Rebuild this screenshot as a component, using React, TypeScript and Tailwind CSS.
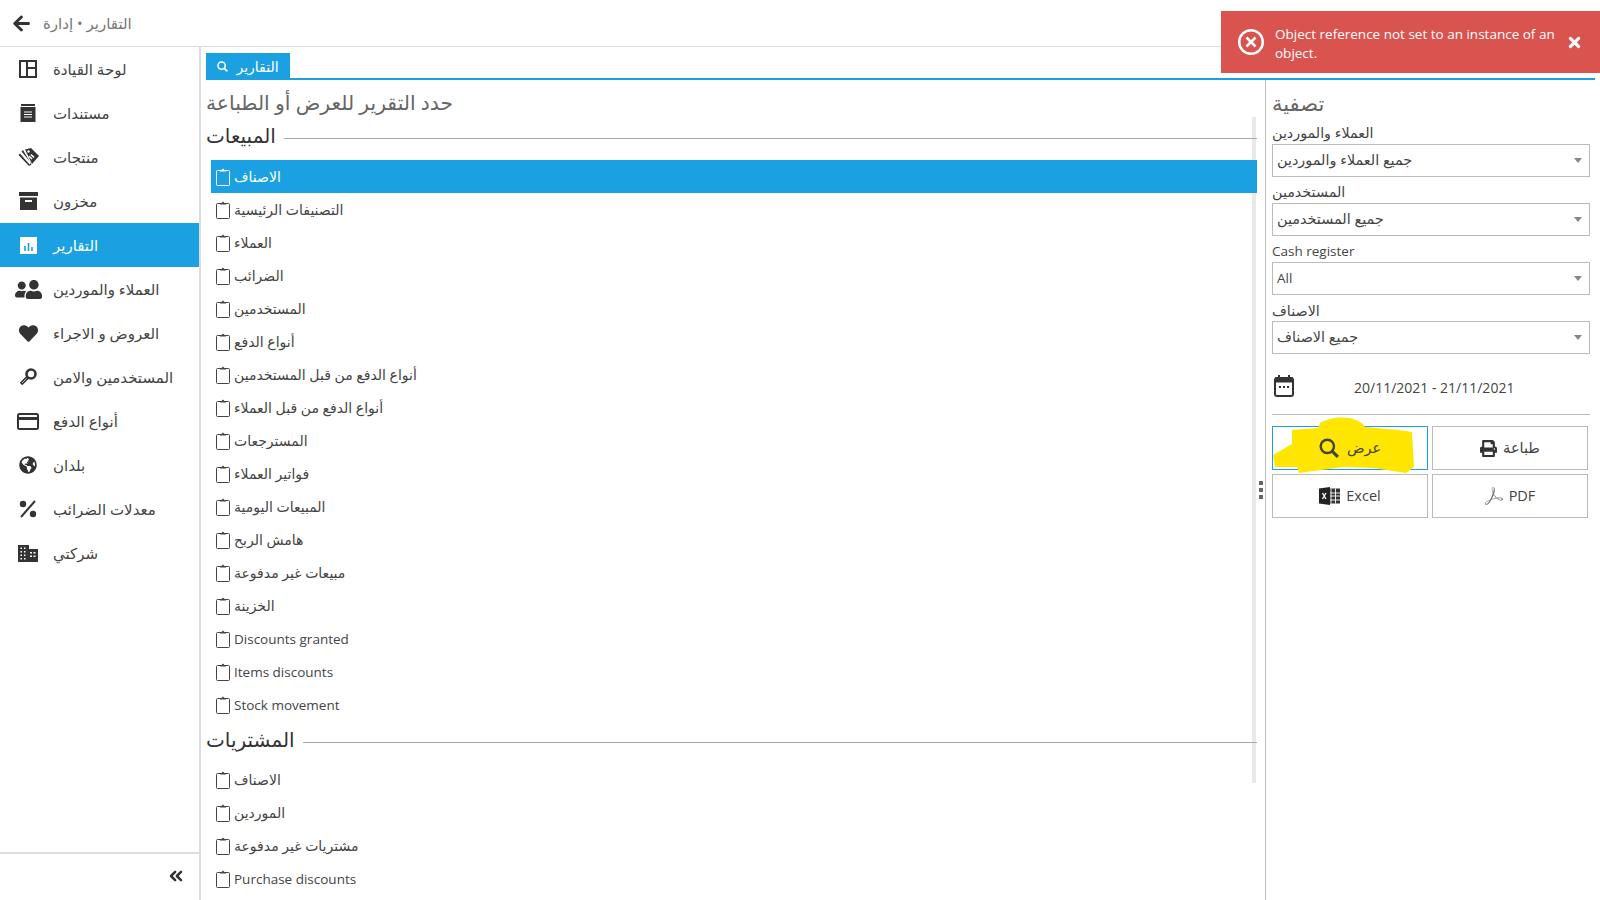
import { ChevronsLeft } from "lucide-react";
import { FaArrowLeft, FaGlobeAmericas, FaHeart, FaPrint, FaTimes, FaUserFriends } from "react-icons/fa";
import { SiAdobeacrobatreader } from "react-icons/si";

function Dashboard() {
  return (
    <svg width="18" height="18" viewBox="0 0 18 18" fill="none" stroke="currentColor" strokeWidth="2">
      <rect x="1" y="1" width="16" height="16" />
      <path d="M8 1v16M8 8h9" />
    </svg>
  );
}

function Docs() {
  return (
    <svg width="16" height="18" viewBox="0 0 16 18" fill="currentColor">
      <rect x="1" y="0" width="14" height="2" />
      <rect x="0.5" y="3" width="15" height="15" />
      <path d="M4 8h8M4 10.5h8M4 13h8" stroke="#fff" strokeWidth="1" />
    </svg>
  );
}

function Tags() {
  return (
    <svg width="21" height="18" viewBox="0 0 21 18" fill="currentColor">
      <path d="M7 1.500 13 0l8 8-7 8z" />
      <path d="M5 2 3.500 3.500 13 15l-1.500 1.500L2 5.500 0.500 7l10.500 11 2.500-1.500z" />
      <circle cx="10.500" cy="3.500" r="1.200" fill="#fff" />
      <path d="m11 8 3 3M13 6.500l3 3" stroke="#fff" strokeWidth="1.500" />
    </svg>
  );
}

function Archive() {
  return (
    <svg width="19" height="18" viewBox="0 0 19 18" fill="currentColor">
      <rect x="0" y="0" width="19" height="4" />
      <rect x="1" y="5.5" width="17" height="12.5" />
      <rect x="6" y="8" width="7" height="2" fill="#fff" />
    </svg>
  );
}

function Bars({ active }: { active: boolean }) {
  return (
    <svg width="17" height="17" viewBox="0 0 17 17">
      <rect width="17" height="17" fill={active ? "#fff" : "#333"} />
      <path d="M5 9v5M8.5 6v8M12 10v4" stroke={active ? "#1ba1e2" : "#fff"} strokeWidth="1.6" />
    </svg>
  );
}

function KeyIcon() {
  return (
    <svg width="18" height="18" viewBox="0 0 18 18" fill="none" stroke="currentColor">
      <circle cx="12" cy="6" r="4.500" strokeWidth="2.600" />
      <path d="M9 9 2 16" strokeWidth="3.500" />
      <path d="M7.500 10.500 3 15" stroke="#fff" strokeWidth="0.700" />
    </svg>
  );
}

function Card() {
  return (
    <svg width="22" height="17" viewBox="0 0 22 17" fill="none" stroke="currentColor">
      <rect x="1" y="1" width="20" height="15" rx="1.5" strokeWidth="2" />
      <path d="M1 5.5h20" strokeWidth="3" />
    </svg>
  );
}

function Percent() {
  return (
    <svg width="18" height="18" viewBox="0 0 18 18" fill="currentColor">
      <circle cx="4" cy="4" r="3.2" />
      <circle cx="14" cy="14" r="3.2" />
      <path d="M16 1 2 17" stroke="currentColor" strokeWidth="2" />
    </svg>
  );
}

function Building() {
  return (
    <svg width="20" height="17" viewBox="0 0 20 17" fill="currentColor">
      <path d="M0 0h11v4h9v13H0z" />
      <path d="M2.5 2.5h1.5v1.500h-1.500zM6 2.500h1.500v1.500H6zM2.500 6h1.500v1.500h-1.500zM6 6h1.500v1.500H6zM2.500 9.500h1.500v1.500h-1.500zM6 9.500h1.500v1.500H6zM2.500 13h1.500v1.500h-1.500zM6 13h1.500v1.500H6zM12 7h2v1.500h-2zM15.500 7h2v1.500h-2zM12 10.500h2V12h-2zM15.500 10.500h2V12h-2z" fill="#fff" />
    </svg>
  );
}

function Clipboard({ color }: { color: string }) {
  return (
    <svg width="14" height="18" viewBox="0 0 14 18" fill="none" stroke={color} className="shrink-0">
      <path d="M4 2.500H1.500a1 1 0 0 0-1 1v13a1 1 0 0 0 1 1h11a1 1 0 0 0 1-1v-13a1 1 0 0 0-1-1H10" />
      <path d="M4 3.500h6V2H8.500L7 .5 5.500 2H4z" fill={color} stroke="none" />
    </svg>
  );
}

function SearchIcon({ size, width }: { size: number; width: number }) {
  return (
    <svg width={size} height={size} viewBox="0 0 18 18" fill="none" stroke="currentColor" strokeWidth={width}>
      <circle cx="7.500" cy="7.500" r="6" />
      <path d="m12 12 5 5" strokeWidth={width + 0.6} />
    </svg>
  );
}

function Calendar() {
  return (
    <svg width="20" height="22" viewBox="0 0 20 22" fill="none" stroke="#333">
      <rect x="1" y="3" width="18" height="18" rx="2" strokeWidth="2" />
      <path d="M1 5h18" strokeWidth="5" />
      <path d="M5 0v3M15 0v3" strokeWidth="2" />
      <path d="M5 12h2M9 12h2M13 12h2" strokeWidth="2" />
    </svg>
  );
}

function ExcelIcon() {
  return (
    <svg width="21" height="18" viewBox="0 0 21 18">
      <rect x="8" y="1.500" width="13" height="15" fill="#333" />
      <path d="M12 1.500v15M16.500 1.500v15M8 6h13M8 9h13M8 13h13" stroke="#fff" strokeWidth="0.9" />
      <path d="M0 1.500 11 0v18L0 16.500z" fill="#222" />
      <path d="M3.500 6 7 12M7 6l-3.500 6" stroke="#fff" strokeWidth="1.300" />
    </svg>
  );
}

const navItems = [
  { label: "لوحة القيادة", icon: <Dashboard /> },
  { label: "مستندات", icon: <Docs /> },
  { label: "منتجات", icon: <Tags /> },
  { label: "مخزون", icon: <Archive /> },
  { label: "التقارير", icon: null, active: true },
  { label: "العملاء والموردين", icon: <FaUserFriends size={27} className="-scale-x-100" /> },
  { label: "العروض و الاجراء", icon: <FaHeart size={19} /> },
  { label: "المستخدمين والامن", icon: <KeyIcon /> },
  { label: "أنواع الدفع", icon: <Card /> },
  { label: "بلدان", icon: <FaGlobeAmericas size={18} /> },
  { label: "معدلات الضرائب", icon: <Percent /> },
  { label: "شركتي", icon: <Building /> },
];

const sales = [
  "الاصناف",
  "التصنيفات الرئيسية",
  "العملاء",
  "الضرائب",
  "المستخدمين",
  "أنواع الدفع",
  "أنواع الدفع من قبل المستخدمين",
  "أنواع الدفع من قبل العملاء",
  "المسترجعات",
  "فواتير العملاء",
  "المبيعات اليومية",
  "هامش الربح",
  "مبيعات غير مدفوعة",
  "الخزينة",
  "Discounts granted",
  "Items discounts",
  "Stock movement",
];

const purchases = ["الاصناف", "الموردين", "مشتريات غير مدفوعة", "Purchase discounts"];

const filters = [
  { label: "العملاء والموردين", value: "جميع العملاء والموردين" },
  { label: "المستخدمين", value: "جميع المستخدمين" },
  { label: "Cash register", value: "All" },
  { label: "الاصناف", value: "جميع الاصناف" },
];

function ReportRow({ label, selected }: { label: string; selected?: boolean }) {
  const latin = /[a-z]/i.test(label);
  return (
    <div className={`flex h-[33px] items-center gap-[4px] pl-[5px] ${latin ? "text-[13.5px]" : "text-[14px]"} ${selected ? "bg-[#1ba1e2] text-white" : "text-[#444]"}`}>
      <Clipboard color={selected ? "#fff" : "#444"} />
      <span className={latin ? "pt-[1px]" : ""}>{label}</span>
    </div>
  );
}

function SectionTitle({ label }: { label: string }) {
  return (
    <div className="flex h-[33px] items-center gap-2 text-[20px] leading-none text-[#333]">
      <span>{label}</span>
      <div className="mt-[5px] h-px flex-1 bg-[#aaa]" />
    </div>
  );
}

function ActionButton({ children }: { children: React.ReactNode }) {
  return (
    <button className="flex h-[44px] items-center justify-center gap-[6px] border border-[#bbb] bg-white text-[14.5px] text-[#444]">
      {children}
    </button>
  );
}

export default function App() {
  return (
    <div className="relative flex h-screen w-full flex-col overflow-hidden bg-white font-['Open_Sans','DejaVu_Sans',sans-serif] text-[#444]">
      {/* Header */}
      <div className="flex h-[47px] shrink-0 items-center gap-[12px] border-b border-[#ddd] pl-[12px]">
        <FaArrowLeft size={19} className="text-[#333]" />
        <span className="text-[15px] text-[#777]">التقارير • إدارة</span>
      </div>

      {/* Error toast */}
      <div className="absolute right-0 top-[11px] z-20 flex h-[62px] w-[379px] items-center bg-[#d9534f] pl-[16px] pr-[17px] text-[13.5px] leading-[19px] text-white">
        <svg width="28" height="28" viewBox="0 0 28 28" fill="none" stroke="#fff" strokeWidth="2.500" className="shrink-0">
          <circle cx="14" cy="14" r="11.800" />
          <path d="m9.500 9.500 9 9M18.500 9.500l-9 9" />
        </svg>
        <div className="ml-[10px] flex-1 pt-[3px]">Object reference not set to an instance of an object.</div>
        <FaTimes size={17} className="ml-2 shrink-0" />
      </div>

      <div className="flex min-h-0 flex-1">
        {/* Sidebar */}
        <div className="flex w-[201px] shrink-0 flex-col border-r-2 border-[#ddd]">
          <div className="flex-1">
            {navItems.map((item) => (
              <div
                key={item.label}
                className={`flex h-[44px] items-center text-[15px] ${item.active ? "bg-[#1ba1e2] text-white" : "text-[#444]"}`}
              >
                <div className={`ml-[6px] mr-[3px] flex w-[44px] shrink-0 items-center justify-center ${item.active ? "text-white" : "text-[#333]"}`}>
                  {item.icon ?? <Bars active />}
                </div>
                <span>{item.label}</span>
              </div>
            ))}
          </div>
          <div className="flex h-[48px] shrink-0 items-center justify-end border-t-2 border-[#ddd] pb-[2px] pr-[13px] text-[#333]">
            <ChevronsLeft size={20} strokeWidth={3} />
          </div>
        </div>

        {/* Main */}
        <div className="flex min-w-0 flex-1 flex-col">
          <div className="ml-[5px] mr-[5px] mt-[6px] border-b-2 border-[#1ba1e2]">
            <div className="flex h-[25px] w-[84px] items-center justify-center gap-[8px] bg-[#1ba1e2] pt-[1px] text-[14px] text-white">
              <SearchIcon size={11} width={2.500} />
              <span>التقارير</span>
            </div>
          </div>

          <div className="flex min-h-0 flex-1">
            {/* Report list */}
            <div className="relative min-w-0 flex-1 overflow-hidden pl-[5px]">
              <div className="absolute left-[1051px] top-[37px] h-[666px] w-[4px] bg-[#e8e8e8]" />
              <div className="relative">
                <div className="mt-[9px] flex h-[30px] items-center pb-[3px] text-[20.3px] text-[#666]">حدد التقرير للعرض أو الطباعة</div>
                <div className="w-[1051px]">
                  <SectionTitle label="المبيعات" />
                  <div className="ml-[5px] mt-[8px]">
                    {sales.map((label, i) => (
                      <ReportRow key={i} label={label} selected={i === 0} />
                    ))}
                  </div>
                  <div className="mt-[2px]">
                    <SectionTitle label="المشتريات" />
                  </div>
                  <div className="ml-[5px] mt-[7px]">
                    {purchases.map((label, i) => (
                      <ReportRow key={i} label={label} />
                    ))}
                  </div>
                </div>
              </div>
              <div className="absolute right-[2px] top-[401px] flex flex-col gap-[3px]">
                <div className="h-[4px] w-[4px] bg-[#666]" />
                <div className="h-[4px] w-[4px] bg-[#666]" />
                <div className="h-[4px] w-[4px] bg-[#666]" />
              </div>
            </div>

            {/* Filter panel */}
            <div className="w-[335px] shrink-0 border-l border-[#bbb] pl-[6px] pr-[10px]">
              <div className="mt-[8px] flex h-[31px] items-center text-[21px] text-[#666]">تصفية</div>
              <div className="flex flex-col gap-[1px]">
                {filters.map((filter, i) => {
                  const latin = /[a-z]/i.test(filter.label);
                  return (
                    <div key={filter.label}>
                      <div className={`flex h-[25px] items-center text-[#444] ${latin ? "pt-[3px] text-[13.5px]" : "text-[14.3px]"} ${i === 3 ? "pt-[5px]" : "pt-[2px]"}`}>{filter.label}</div>
                      <div className="flex h-[33px] items-center justify-between border border-[#bbb] pb-[1px] pl-[4px] pr-[7px] text-[14.4px]">
                        <span className={filter.value === "All" ? "text-[13.5px]" : ""}>{filter.value}</span>
                        <div className="h-0 w-0 border-x-[4px] border-t-[5px] border-x-transparent border-t-[#888]" />
                      </div>
                    </div>
                  );
                })}
              </div>
              <div className="mt-[17px] flex h-[44px] items-center border-b border-[#bbb] pb-[10px] pl-[2px]">
                <div className="-mt-[3px]">
                  <Calendar />
                </div>
                <span className="ml-[60px] text-[14px]">20/11/2021 - 21/11/2021</span>
              </div>
              <div className="mt-[11px] grid w-[316px] grid-cols-2 gap-x-[4px] gap-y-[4px]">
                <button className="relative flex h-[44px] items-center justify-center gap-2 border border-[#1ba1e2] bg-white text-[14.5px] text-[#444]">
                  <svg width="142" height="58" viewBox="0 0 142 58" className="absolute left-0 top-[-10px]">
                    <path d="M19 13 45 11 47 6C60 -2 85 -2 92 10L125 13 139 15 141 50 133 56 100 51 70 50 26 56 24 50 2 50 0 38 19 27z" fill="#ffe600" />
                  </svg>
                  <span className="relative flex items-center gap-2">
                    <SearchIcon size={20} width={2.200} />
                    <span>عرض</span>
                  </span>
                </button>
                <ActionButton>
                  <FaPrint size={17} className="text-[#333]" />
                  <span>طباعة</span>
                </ActionButton>
                <ActionButton>
                  <ExcelIcon />
                  <span>Excel</span>
                </ActionButton>
                <ActionButton>
                  <SiAdobeacrobatreader size={18} className="text-[#777]" />
                  <span>PDF</span>
                </ActionButton>
              </div>
            </div>
          </div>
        </div>
      </div>
    </div>
  );
}
